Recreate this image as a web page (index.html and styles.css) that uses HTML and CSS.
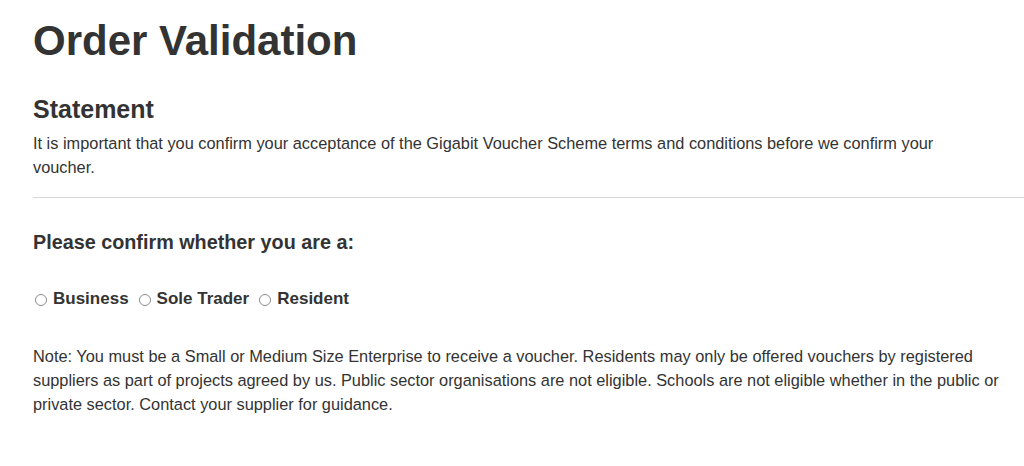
FILE: index.html
```html
<!DOCTYPE html>
<html lang="en">
<head>
    <meta charset="UTF-8">
    <meta name="viewport" content="width=device-width, initial-scale=1.0">
    <title>Order Validation</title>
    <link rel="stylesheet" href="styles.css">
</head>
<body>

<div class="page">
    <h1>Order Validation</h1>

    <!-- statement -->
    <div class="section statement">
        <h2>Statement</h2>
        <p>It is important that you confirm your acceptance of the Gigabit Voucher Scheme terms and conditions before we confirm your voucher.</p>
    </div>

    <hr>

    <!-- applicant type -->
    <div class="section">
        <h3>Please confirm whether you are a:</h3>
        <div class="choices">
            <label><input type="radio" name="type" value="business">Business</label>
            <label><input type="radio" name="type" value="sole">Sole Trader</label>
            <label><input type="radio" name="type" value="resident">Resident</label>
        </div>
        <p class="note">Note: You must be a Small or Medium Size Enterprise to receive a voucher. Residents may only be offered vouchers by registered suppliers as part of projects agreed by us. Public sector organisations are not eligible. Schools are not eligible whether in the public or private sector. Contact your supplier for guidance.</p>
    </div>
</div>

</body>
</html>
```

FILE: styles.css
```css
body {
    margin: 0;
    font-family: "Liberation Sans", Arial, sans-serif;
    color: #333;
    background-color: #fff;
}

.page {
    padding: 17px 0 0 33px;
}

h1 {
    font-size: 42px;
    font-weight: bold;
    margin: 0;
    line-height: 48px;
}

.section {
    max-width: 980px;
}

.statement {
    max-width: 945px;
}

h2 {
    font-size: 25px;
    margin: 29px 0 0 0;
    line-height: 30px;
}

p {
    font-size: 16.35px;
    line-height: 24px;
    margin: 7px 0 0 0;
}

hr {
    border: none;
    border-top: 1px solid #d6d6d6;
    margin: 18px 0 0 0;
}

h3 {
    font-size: 19.8px;
    margin: 32px 0 0 0;
    line-height: 24px;
}

.choices {
    display: flex;
    gap: 8px;
    margin-top: 34px;
    font-size: 17px;
    line-height: 22px;
    font-weight: bold;
}

.choices label {
    display: flex;
    align-items: center;
}

.choices input {
    appearance: none;
    margin: 2px 6px 0 2px;
    width: 12px;
    height: 12px;
    border: 1px solid #8a8a8a;
    border-radius: 50%;
    background-color: #fff;
}

.note {
    margin-top: 34px;
}
```
